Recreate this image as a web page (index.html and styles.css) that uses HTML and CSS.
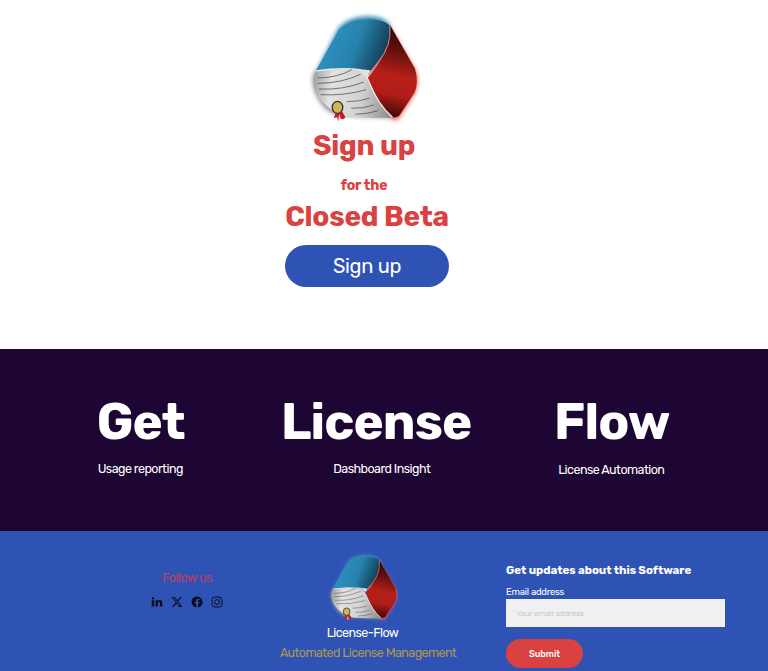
FILE: index.html
```html
<!DOCTYPE html>
<html lang="en">

<head>
    <meta charset="UTF-8">
    <meta name="viewport" content="width=device-width, initial-scale=1.0">
    <title>License-Flow</title>
    <link rel="stylesheet" href="styles.css">
</head>

<body>
    <section class="hero">
        <svg class="hero-logo" viewBox="50 20 350 360" role="img" aria-label="License-Flow">
            <defs>
                <linearGradient id="blue" x1="0.1" y1="0.5" x2="1" y2="0.75">
                    <stop offset="0" stop-color="#2d90bf" />
                    <stop offset="0.45" stop-color="#2782ad" />
                    <stop offset="0.7" stop-color="#1b5b7a" />
                    <stop offset="1" stop-color="#0f2f40" />
                </linearGradient>
                <linearGradient id="red" x1="0.6" y1="0" x2="0.5" y2="1">
                    <stop offset="0" stop-color="#260505" />
                    <stop offset="0.25" stop-color="#5d100d" />
                    <stop offset="0.55" stop-color="#b81f19" />
                    <stop offset="0.75" stop-color="#b01d18" />
                    <stop offset="1" stop-color="#3c0705" />
                </linearGradient>
                <linearGradient id="paper" x1="0" y1="0.5" x2="1" y2="0.6">
                    <stop offset="0" stop-color="#a7a7a7" />
                    <stop offset="0.2" stop-color="#e2e2e2" />
                    <stop offset="0.6" stop-color="#d2d2d2" />
                    <stop offset="1" stop-color="#8c8c8c" />
                </linearGradient>
                <filter id="soft" x="-20%" y="-20%" width="140%" height="140%">
                    <feGaussianBlur stdDeviation="7" />
                </filter>
            </defs>
            <g id="logo">
                <g filter="url(#soft)">
                    <path d="M82 210L148 80Q185 44 245 48Q287 52 303 74L240 210Z" fill="#388bad" />
                    <path d="M299 75L380 214Q391 245 374 282L326 358L306 358L240 225Z" fill="#ed5a55" />
                    <path d="M78 208Q60 235 76 276Q100 335 146 346L310 354L220 225Z" fill="#999" />
                </g>
                <path d="M79 211L148 88Q178 58 238 57Q283 58 302 76Q304 133 269 183L235 222L213 207Q134 203 79 211Z" fill="url(#blue)" />
                <path d="M302 75L376 204Q388 243 376 276L329 346Q310 357 299 345Q262 303 235 232Q297 167 302 75Z" fill="url(#red)" />
                <path d="M79 212Q151 203 211 209Q231 224 239 246Q266 315 309 352Q228 353 175 349L146 343Q94 309 78 276Q65 235 79 212Z" fill="url(#paper)" />
                <path d="M213 207L243 210L235 226Z" fill="#d9e5eb" />
                <path d="M301 75Q307 136 268 182L235 225" fill="none" stroke="#c49da8" stroke-width="3" />
                <path d="M79 212Q151 201 213 208Q232 225 240 248Q267 315 309 351" fill="none" stroke="#f0e4e4" stroke-width="4" />
                <g fill="none" stroke="#494949" stroke-width="2.2">
                    <path d="M85 233Q145 232 187 208" />
                    <path d="M85 249Q155 249 213 222" />
                    <path d="M88 266Q160 270 223 245" />
                    <path d="M94 283Q165 287 230 268" />
                    <path d="M172 304Q209 304 240 294" />
                    <path d="M185 324Q220 325 254 314" />
                    <path d="M198 342Q235 341 266 331" />
                </g>
                <path d="M139 336L133 353L143 351L146 363L151 355L161 357L168 351L159 335Z" fill="#c51c2b" />
                <path d="M149 341L146 362L154 355Z" fill="#f3d6d6" />
                <ellipse cx="144" cy="321" rx="16" ry="18" fill="#d0b45c" stroke="#37352e" stroke-width="4" />
            </g>
        </svg>
        <h1 class="hero-title">Sign up</h1>
        <p class="hero-for">for the</p>
        <h1 class="hero-beta">Closed Beta</h1>
        <a class="hero-button" href="#">Sign up</a>
    </section>

    <section class="features">
        <div class="feature">
            <h2>Get</h2>
            <p>Usage reporting</p>
        </div>
        <div class="feature">
            <h2>License</h2>
            <p class="dashboard">Dashboard Insight</p>
        </div>
        <div class="feature">
            <h2>Flow</h2>
            <p class="automation">License Automation</p>
        </div>
    </section>

    <footer class="footer">
        <div class="social">
            <p class="follow">Follow us</p>
            <div class="social-icons">
                <!-- LinkedIn -->
                <svg viewBox="0 0 24 24"><path d="M1.5 8.5h4.8V21H1.5zM4 2.2a2.500 2.500 0 1 1 0 5 2.500 2.500 0 0 1 0-5zM9 8.500h4.300v1.800c.8-1.400 2.200-2.200 4-2.200 4 0 5.200 2.500 5.200 6.200V21h-4.700v-6.100c0-1.800-.3-3-1.900-3-1.800 0-2.200 1.400-2.200 3V21H9z" /></svg>
                <!-- X -->
                <svg viewBox="0 0 24 24"><path d="M18.2 2.3h3.4l-7.2 8.2 8.5 11.3h-6.7L11 14.9l-6 6.9H1.7l7.7-8.8L1.3 2.3h6.8l4.7 6.2zM17 19.8h1.9L7.1 4.1H5.1z" /></svg>
                <!-- Facebook -->
                <svg viewBox="0 0 24 24"><path d="M23 12A11 11 0 1 0 10.3 22.9v-7.7H7.5V12h2.8V9.6c0-2.8 1.6-4.3 4.2-4.3 1.2 0 2.4.2 2.4.2v2.7h-1.4c-1.4 0-1.8.9-1.8 1.7V12h3.1l-.5 3.2h-2.6v7.7A11 11 0 0 0 23 12z" /></svg>
                <!-- Instagram -->
                <svg viewBox="0 0 24 24">
                    <rect x="2" y="2" width="20" height="20" rx="5.5" fill="none" stroke="#0a0d1c" stroke-width="2" />
                    <circle cx="12" cy="12" r="4.8" fill="none" stroke="#0a0d1c" stroke-width="2" />
                    <circle cx="17.8" cy="6.2" r="1.3" />
                </svg>
            </div>
        </div>
        <div class="brand">
            <svg class="brand-logo" viewBox="50 20 350 360" aria-hidden="true"><use href="#logo" /></svg>
            <p class="brand-name">License-Flow</p>
            <p class="brand-tagline">Automated License Management</p>
        </div>
        <form class="updates">
            <h3 class="updates-title">Get updates about this Software</h3>
            <label class="updates-label" for="email">Email address</label>
            <input class="updates-input" id="email" type="email" placeholder="Your email address">
            <button class="updates-submit" type="button">Submit</button>
        </form>
    </footer>
</body>

</html>
```

FILE: styles.css
```css
:root {
    --red: #da4141;
    --blue: #2f53b5;
    --dark: #1d0633;
}

* {
    box-sizing: border-box;
}

body {
    margin: 0;
    height: 671px;
    overflow: hidden;
    background: #fff;
    font-family: Rubik, Roboto, "Liberation Sans", sans-serif;
}

h1,
h2,
h3,
p {
    margin: 0;
    white-space: nowrap;
}

.hero {
    display: flex;
    flex-direction: column;
    align-items: center;
    height: 349px;
    padding: 7px 34px 0 0;
    color: var(--red);
}

.hero-logo {
    width: 117px;
    height: 120px;
    margin-right: 5px;
}

.hero-title,
.hero-beta {
    font-size: 28px;
    line-height: 36px;
    font-weight: 700;
    letter-spacing: -0.25px;
}

.hero-title {
    margin: 1px 6px 0 0;
}

.hero-for {
    margin: 13px 6px 4px 0;
    font-size: 14px;
    line-height: 18px;
    font-weight: 700;
    letter-spacing: -0.1px;
}

.hero-button {
    width: 164px;
    margin-top: 10px;
    border-radius: 22px;
    background: var(--blue);
    color: #fff;
    font-size: 20px;
    line-height: 42px;
    letter-spacing: -0.3px;
    text-align: center;
    text-decoration: none;
}

.features {
    display: grid;
    grid-template-columns: repeat(3, 235.5px);
    height: 182px;
    padding: 43px 0 0 23px;
    background: var(--dark);
    color: #fff;
}

.feature {
    display: flex;
    flex-direction: column;
    align-items: center;
}

.feature h2 {
    font-size: 51px;
    line-height: 60px;
    font-weight: 750;
    letter-spacing: -0.9px;
}

.feature p {
    margin: 9px 1px 0 0;
    font-size: 12.5px;
    line-height: 16px;
    letter-spacing: -0.55px;
}

.feature .dashboard {
    margin-left: 12px;
}

.feature .automation {
    margin-top: 10px;
}

.footer {
    display: flex;
    height: 140px;
    background: var(--blue);
    color: #fff;
}

.social {
    width: 110px;
    margin-left: 132px;
    padding-top: 39px;
    text-align: center;
}

.follow {
    color: #c23d5a;
    font-size: 12.5px;
    line-height: 16px;
    letter-spacing: -0.5px;
}

.social-icons {
    display: flex;
    justify-content: center;
    gap: 8px;
    margin-top: 10px;
    fill: #0a0d1c;
}

.social-icons svg {
    width: 12px;
    height: 12px;
}

.brand {
    display: flex;
    flex-direction: column;
    align-items: center;
    width: 200px;
    margin-left: 26px;
    padding-top: 18px;
}

.brand-logo {
    width: 73px;
    height: 75px;
    margin-right: 9px;
}

.brand-name {
    margin: 1px 11px 0 0;
    font-size: 12.5px;
    line-height: 16px;
    letter-spacing: -0.55px;
}

.brand-tagline {
    margin-top: 4px;
    color: #ae974c;
    font-size: 12.5px;
    line-height: 16px;
    letter-spacing: -0.58px;
}

.updates {
    width: 219px;
    margin-left: 38px;
    padding-top: 31px;
}

.updates-title {
    font-size: 11.5px;
    line-height: 16px;
    font-weight: 700;
    letter-spacing: -0.05px;
}

.updates-label {
    display: block;
    margin-top: 7px;
    font-size: 9.5px;
    line-height: 14px;
    letter-spacing: -0.25px;
}

.updates-input {
    display: block;
    width: 219px;
    height: 28px;
    padding: 0 10px;
    border: 0;
    border-radius: 0;
    background: #f0f0f0;
    font: 300 8px Rubik, Roboto, sans-serif;
}

.updates-input::placeholder {
    color: #b8b8b8;
}

.updates-submit {
    width: 77px;
    height: 29px;
    margin-top: 12px;
    border: 0;
    border-radius: 15px;
    background: var(--red);
    color: #fff;
    font: 500 9px Rubik, Roboto, sans-serif;
}
```
